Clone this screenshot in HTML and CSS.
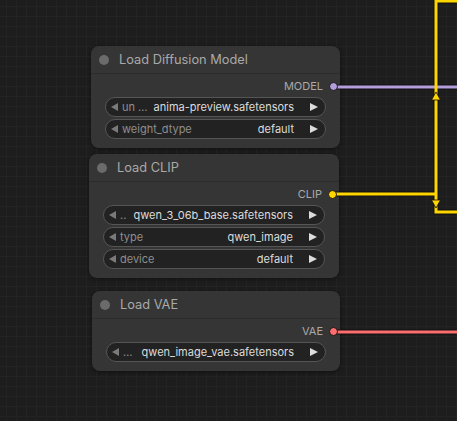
FILE: index.html
```html
<!DOCTYPE html>
<html>
<head>
<meta charset="utf-8">
<link rel="stylesheet" href="styles.css">
</head>
<body>
<div class="canvas">
  <svg class="wires" width="457" height="421" viewBox="0 0 457 421">
    <g fill="none" stroke-linecap="butt">
      <path d="M332 87 H457" stroke="#111" stroke-width="5"/>
      <path d="M330 194 H436 M436 0 V212 H457 M436 1 H457" stroke="#111" stroke-width="5"/>
      <path d="M332 332 H457" stroke="#111" stroke-width="5"/>
      <path d="M332 87 H457" stroke="#b39ddb" stroke-width="3"/>
      <path d="M330 194 H436 M436 0 V212 H457 M436 1 H457" stroke="#ffd500" stroke-width="3"/>
      <path d="M332 332 H457" stroke="#ff6e6e" stroke-width="3"/>
    </g>
    <path d="M436 92 L440.5 100 L431.5 100 Z" fill="#ffd500" stroke="#111" stroke-width="0.8"/>
    <path d="M436 208 L440.5 200 L431.5 200 Z" fill="#ffd500" stroke="#111" stroke-width="0.8"/>
  </svg>

  <div class="node n1">
    <div class="title"><span class="tdot"></span>Load Diffusion Model</div>
    <div class="body">
      <div class="slot"><span class="slabel">MODEL</span><span class="sdot model"></span></div>
      <div class="widget"><span class="la"></span><span class="wlabel">un …</span><span class="wval">anima-preview.safetensors</span><span class="ra"></span></div>
      <div class="widget"><span class="la"></span><span class="wlabel">weight_dtype</span><span class="wval">default</span><span class="ra"></span></div>
    </div>
  </div>

  <div class="node n2">
    <div class="title"><span class="tdot"></span>Load CLIP</div>
    <div class="body">
      <div class="slot"><span class="slabel">CLIP</span><span class="sdot clip"></span></div>
      <div class="widget"><span class="la"></span><span class="wlabel">..</span><span class="wval">qwen_3_06b_base.safetensors</span><span class="ra"></span></div>
      <div class="widget"><span class="la"></span><span class="wlabel">type</span><span class="wval">qwen_image</span><span class="ra"></span></div>
      <div class="widget"><span class="la"></span><span class="wlabel">device</span><span class="wval">default</span><span class="ra"></span></div>
    </div>
  </div>

  <div class="node n3">
    <div class="title"><span class="tdot"></span>Load VAE</div>
    <div class="body">
      <div class="slot"><span class="slabel">VAE</span><span class="sdot vae"></span></div>
      <div class="widget"><span class="la"></span><span class="wlabel">…</span><span class="wval">qwen_image_vae.safetensors</span><span class="ra"></span></div>
    </div>
  </div>
</div>
</body>
</html>
```
FILE: styles.css
```css
html, body {
  margin: 0;
  padding: 0;
  background: #1c1c1c;
}
.canvas {
  position: relative;
  width: 457px;
  height: 421px;
  overflow: hidden;
  background-color: #1d1d1d;
  background-image:
    linear-gradient(to right, #232323 1px, transparent 1px),
    linear-gradient(to bottom, #232323 1px, transparent 1px);
  background-size: 10px 10px;
  background-position: 6px 6px;
  font-family: Inter, "Noto Sans", sans-serif;
}
.wires {
  position: absolute;
  left: 0;
  top: 0;
  z-index: 1;
}
.node {
  position: absolute;
  width: 249px;
  background: #353535;
  border-radius: 8px;
  box-shadow: 0 1px 4px rgba(0,0,0,0.45);
}
.n1 { left: 91px; top: 46px; }
.n2 { left: 89px; top: 154px; width: 250px; }
.n3 { left: 92px; top: 291px; width: 248px; }
.title {
  height: 27px;
  border-bottom: 1px solid #2c2c2c;
  display: flex;
  align-items: center;
  padding-left: 8px;
  color: #a9a9a9;
  font-size: 12.8px;
}
.tdot {
  width: 10px;
  height: 10px;
  border-radius: 50%;
  background: #6b6b6b;
  margin-right: 10px;
  margin-top: 1px;
}
.body {
  padding: 2px 14px 9px 14px;
  display: flex;
  flex-direction: column;
  gap: 2px;
}
.slot {
  height: 20px;
  display: flex;
  align-items: center;
  justify-content: flex-end;
  margin-right: -12px;
  margin-bottom: -1px;
}
.slabel {
  color: #a9a9a9;
  font-size: 11px;
  margin-right: 6px;
}
.sdot {
  position: relative;
  z-index: 2;
  width: 7px;
  height: 7px;
  border-radius: 50%;
  border: 1px solid #151515;
}
.model { background: #b39ddb; }
.clip { background: #ffd500; }
.vae { background: #ff6e6e; }
.widget {
  height: 18px;
  border: 1px solid #555;
  border-radius: 10px;
  background: #222;
  display: flex;
  align-items: center;
  padding: 0 7px 0 4px;
  font-size: 11px;
}
.la {
  width: 0;
  height: 0;
  border-top: 4.5px solid transparent;
  border-bottom: 4.5px solid transparent;
  border-right: 7px solid #7a7a7a;
  margin-left: 1px;
  margin-right: 4px;
}
.ra {
  width: 0;
  height: 0;
  border-top: 4.5px solid transparent;
  border-bottom: 4.5px solid transparent;
  border-left: 8px solid #dcdcdc;
  margin-left: 16px;
}
.wlabel {
  color: #8e8e8e;
  white-space: nowrap;
}
.wval {
  flex: 1;
  text-align: right;
  color: #dcdcdc;
  white-space: nowrap;
  margin-left: 6px;
}
```
